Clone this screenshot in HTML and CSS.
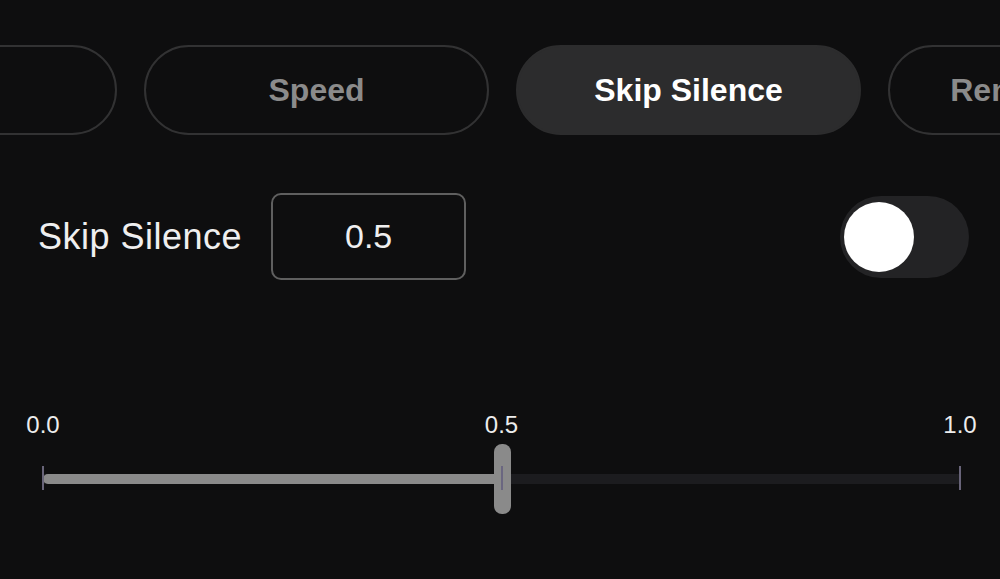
FILE: index.html
```html
<!DOCTYPE html>
<html>
<head>
<meta charset="utf-8">
<title>Skip Silence</title>
<link rel="stylesheet" href="styles.css">
</head>
<body>
<div class="tabs">
  <div class="tab">Pitch</div>
  <div class="tab">Speed</div>
  <div class="tab active">Skip Silence</div>
  <div class="tab">Remove Noise</div>
</div>

<div class="setting">
  <span class="setting-label">Skip Silence</span>
  <div class="value-box">0.5</div>
  <div class="toggle"><div class="knob"></div></div>
</div>

<div class="slider">
  <span class="mark" style="left:0%">0.0</span>
  <span class="mark" style="left:50%">0.5</span>
  <span class="mark" style="left:100%">1.0</span>
  <div class="track"></div>
  <div class="fill" style="width:50%"></div>
  <div class="tick" style="left:0%"></div>
  <div class="tick" style="left:100%"></div>
  <div class="thumb" style="left:50%"><div class="thumb-line"></div></div>
</div>
</body>
</html>
```
FILE: styles.css
```css
body {
    margin: 0;
    background: #0e0e0f;
    color: #ececec;
    font-family: "Liberation Sans", Arial, sans-serif;
    overflow: hidden;
}
.tabs {
    display: flex;
    gap: 27px;
    margin-left: -228px;
    padding-top: 45px;
}
.tab {
    flex: none;
    box-sizing: border-box;
    width: 345px;
    height: 90px;
    border: 2px solid #323233;
    border-radius: 45px;
    display: flex;
    align-items: center;
    justify-content: center;
    white-space: nowrap;
    font-size: 32px;
    font-weight: bold;
    color: #8b8b8b;
}
.tab.active {
    background: #2c2c2d;
    border-color: #2c2c2d;
    color: #ffffff;
}
.setting {
    display: flex;
    align-items: center;
    margin-top: 58px;
    padding: 0 31px 0 38px;
}
.setting-label {
    font-size: 36px;
    letter-spacing: 0.5px;
    color: #efefef;
}
.value-box {
    box-sizing: border-box;
    width: 195px;
    height: 87px;
    margin-left: 29px;
    border: 2px solid #5f5f5f;
    border-radius: 10px;
    display: flex;
    align-items: center;
    justify-content: center;
    font-size: 34px;
    color: #efefef;
}
.toggle {
    margin-left: auto;
    box-sizing: border-box;
    width: 129px;
    height: 82px;
    padding: 6px 4px;
    border-radius: 41px;
    background: #232325;
}
.knob {
    width: 70px;
    height: 70px;
    border-radius: 50%;
    background: #ffffff;
}
.slider {
    position: relative;
    height: 110px;
    margin: 130px 40px 0 43px;
}
.mark {
    position: absolute;
    top: 0;
    transform: translateX(-50%);
    font-size: 24px;
    line-height: 30px;
    color: #ececec;
}
.track {
    position: absolute;
    top: 64px;
    left: 0;
    right: 0;
    height: 10px;
    background: #1c1c1f;
}
.fill {
    position: absolute;
    top: 64px;
    left: 0;
    height: 10px;
    border-radius: 5px 0 0 5px;
    background: #8a8a8a;
}
.tick {
    position: absolute;
    top: 56px;
    width: 2px;
    height: 24px;
    margin-left: -1px;
    background: #686479;
}
.thumb {
    position: absolute;
    top: 34px;
    width: 17px;
    height: 70px;
    margin-left: -8px;
    border-radius: 8px;
    background: #8a8a8a;
}
.thumb-line {
    width: 2px;
    height: 24px;
    margin: 22px auto 0;
    background: #6a6680;
}
```
